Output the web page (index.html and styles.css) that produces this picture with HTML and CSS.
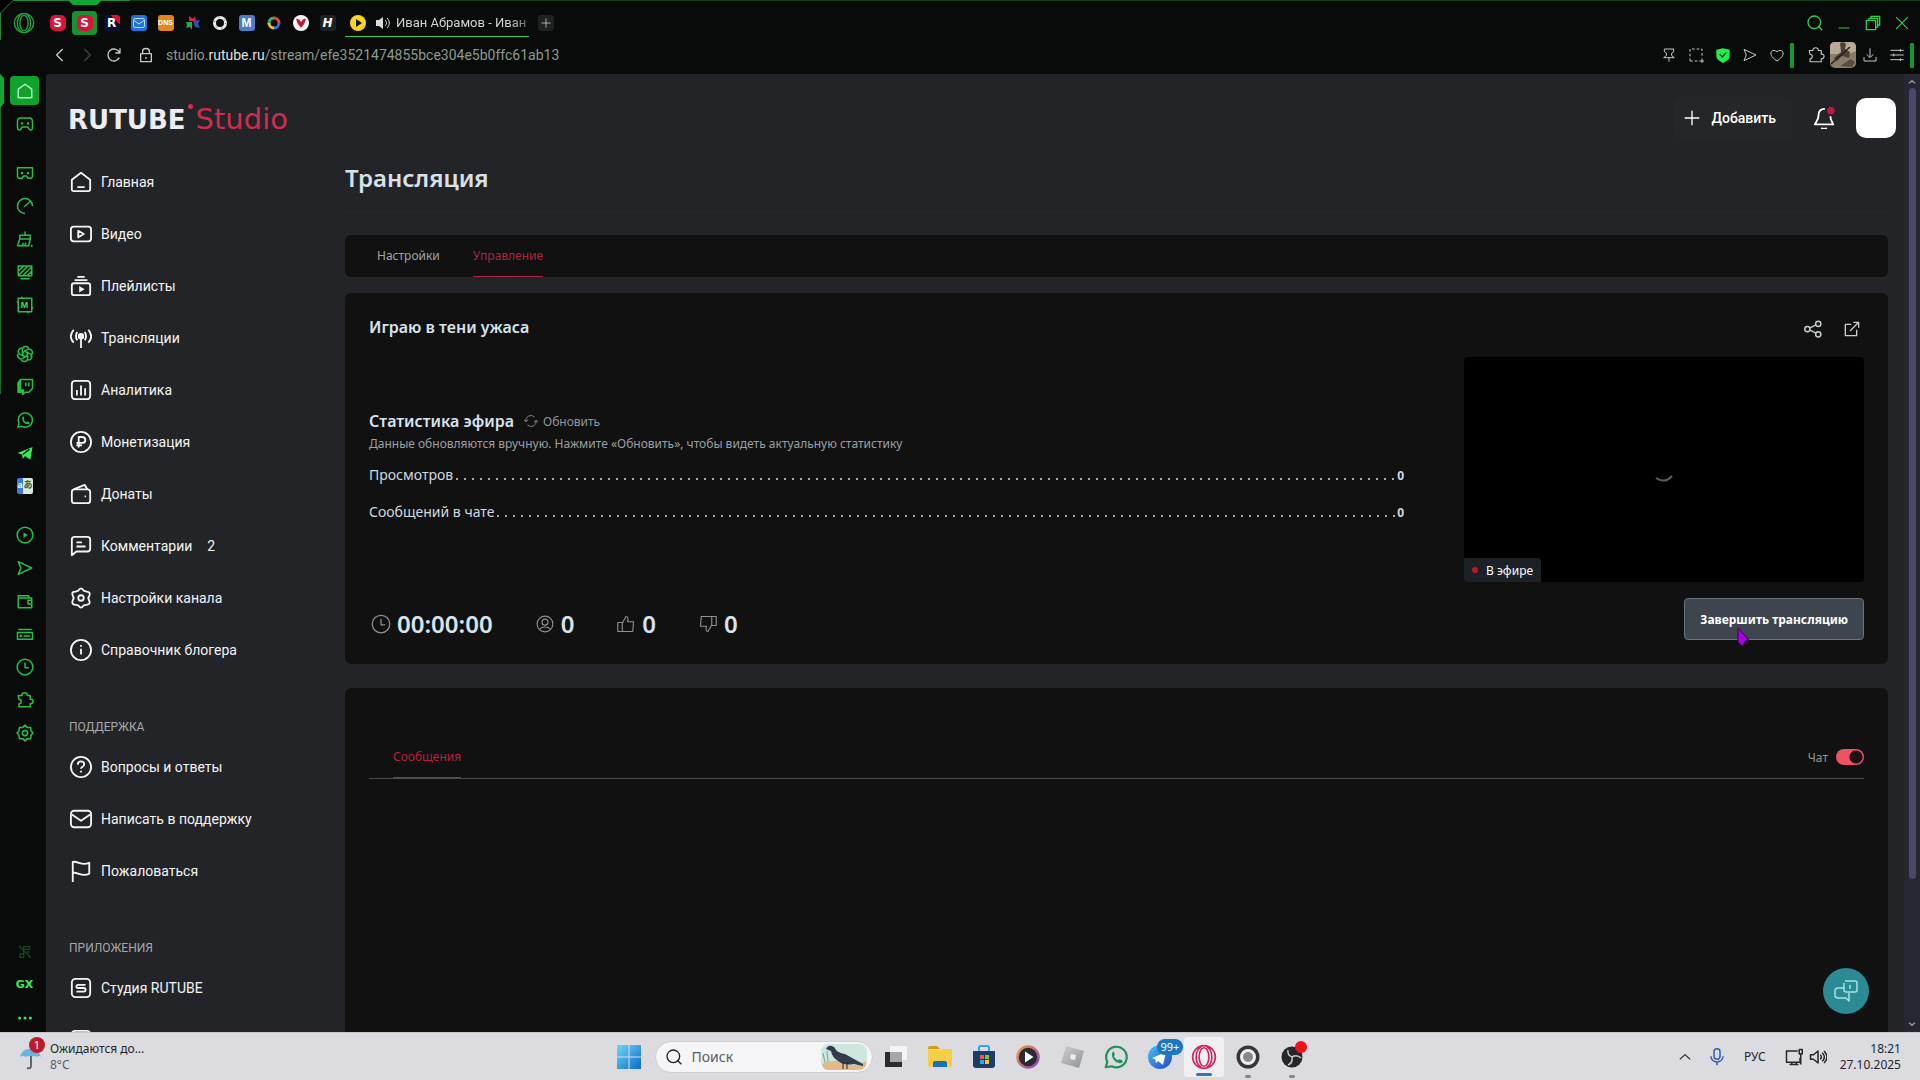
FILE: index.html
```html
<!DOCTYPE html>
<html lang="ru">
<head>
<meta charset="utf-8">
<title>RUTUBE Studio — Трансляция</title>
<link rel="stylesheet" href="styles.css">
</head>
<body>
<svg class="sprite" aria-hidden="true">
  <defs>
    <linearGradient id="win" x1="0" y1="0" x2="1" y2="1"><stop offset="0" stop-color="#6fd6f7"/><stop offset="1" stop-color="#0a6cc8"/></linearGradient>
    <linearGradient id="tg" x1="0" y1="0" x2="1" y2="1"><stop offset="0" stop-color="#4fc0f0"/><stop offset="1" stop-color="#1c46c8"/></linearGradient>
    <linearGradient id="media" x1="0" y1="0" x2="1" y2="1"><stop offset="0" stop-color="#f59a3c"/><stop offset="1" stop-color="#8a3fc0"/></linearGradient>
    <linearGradient id="silver" x1="0" y1="0" x2="1" y2="1"><stop offset="0" stop-color="#cdd0d2"/><stop offset="1" stop-color="#8e9294"/></linearGradient>
  </defs>
  <symbol id="opera" viewBox="0 0 24 24"><ellipse cx="12" cy="12" rx="10.500" ry="10.500"/><ellipse cx="12" cy="12" rx="4.500" ry="8.500"/><path d="M14 2c7 4 7 16 0 20M10 2c-7 4-7 16 0 20"/></symbol>
  <symbol id="home" viewBox="0 0 24 24"><path d="M3 9.500 12 3l9 6.500V21H3z"/></symbol>
  <symbol id="pad" viewBox="0 0 24 24"><path d="M6 4h12c3 0 4 2 4 5v8c0 4-4 4-5 1l-1-2H8l-1 2c-1 3-5 3-5-1V9c0-3 1-5 4-5z"/><path d="M6.500 11h3M14.500 11h3" stroke-width="3"/></symbol>
  <symbol id="vr" viewBox="0 0 24 24"><path d="M2 5h20v12l-2 2h-4l-2-3h-4l-2 3H4l-2-2z"/><path d="M6.500 12h3M14.500 12h3" stroke-width="3"/></symbol>
  <symbol id="gauge" viewBox="0 0 24 24"><path d="M12 22A10 10 0 1 1 22 12M11 13l9-8"/></symbol>
  <symbol id="broom" viewBox="0 0 24 24"><path d="M12 2v5M5 12V7h14v5zM5 12l-3 9h15l2-9M8 21l2-4M12 21l1-4"/><path d="M20 21h2" stroke-width="3"/></symbol>
  <symbol id="screen" viewBox="0 0 24 24"><path d="M3 4h18v13H3zM6 21h12M3 11l7-7M3 17 16 4M9 17 21 5M15 17l6-6"/></symbol>
  <symbol id="modbox" viewBox="0 0 24 24"><path d="M3 3h18v18H3zM8 1v2M16 21v2M1 8h2M21 16h2"/></symbol>
  <symbol id="gpt" viewBox="0 0 24 24"><path id="petal" d="M12 8.500 8.500 10.500v-5a4.500 4.500 0 0 1 8.500-1"/><use href="#petal" transform="rotate(60 12 12)"/><use href="#petal" transform="rotate(120 12 12)"/><use href="#petal" transform="rotate(180 12 12)"/><use href="#petal" transform="rotate(240 12 12)"/><use href="#petal" transform="rotate(300 12 12)"/></symbol>
  <symbol id="twitch" viewBox="0 0 24 24"><path d="M6 2h16v12l-5 5h-4l-4 3v-3H3V6z"/><path d="M13 6v5M17 6v5" stroke-width="2"/><path d="M3 7 6 3v13h4v3H3z" fill="currentColor"/></symbol>
  <symbol id="whats" viewBox="0 0 24 24"><path d="M2.500 21.500 4 16.500A9.500 9.500 0 1 1 8 20.500z"/><path d="M8 7l2 0 1 3-1 1c1 2 2 3 4 4l1-1 3 1v2c-5 3-12-4-9-10z" fill="currentColor" stroke="none"/></symbol>
  <symbol id="plane" viewBox="0 0 24 24"><path d="M2 12 22 4l-3 17-7-5-3 4-1-6z" fill="currentColor" stroke="none"/><path d="m9 14 9-7" stroke="#07150a"/></symbol>
  <symbol id="playc" viewBox="0 0 24 24"><circle cx="12" cy="12" r="10.500"/><path d="m10 8.500 6 3.500-6 3.500z" fill="currentColor" stroke="none"/></symbol>
  <symbol id="send" viewBox="0 0 24 24"><path d="M3 3.500 21 12 3 20.500 6.500 12z"/></symbol>
  <symbol id="wallet" viewBox="0 0 24 24"><path d="M3 8h18v13H3V5h14v3M21 11h-5v5h5"/></symbol>
  <symbol id="drive" viewBox="0 0 24 24"><path d="M3 6h18M2 10h20v9H2zM10 14.500h9"/><path d="M5 14.500h3" stroke-width="3"/></symbol>
  <symbol id="clock" viewBox="0 0 24 24"><circle cx="12" cy="12" r="10.500"/><path d="M12 6v7h5"/></symbol>
  <symbol id="puzzle" viewBox="0 0 24 24"><path d="M3 6h5c-1-5 8-5 7 0h4v5c5-1 5 6 0 6v4H4v-4c4 0 4-6 0-6z"/></symbol>
  <symbol id="gear" viewBox="0 0 24 24"><path d="M12 1.500l3 3 4.500 0 .5 4.500 2.500 3-2.500 3-.5 4.500-4.500 0-3 3-3-3-4.500 0L4 15l-2.500-3L4 9l.5-4.500 4.500 0z"/><circle cx="12" cy="12" r="3.500"/></symbol>
  <symbol id="mute" viewBox="0 0 24 24"><path d="M10 17V4h9v4h-9M5 15h5v5H4zM3 3l18 18M15 12h4"/></symbol>
  <symbol id="dots" viewBox="0 0 24 24"><g fill="currentColor" stroke="none"><circle cx="4" cy="12" r="2.300"/><circle cx="12" cy="12" r="2.300"/><circle cx="20" cy="12" r="2.300"/></g></symbol>
  <symbol id="search" viewBox="0 0 24 24"><circle cx="11" cy="11" r="9.500"/><path d="m17 17 6 6"/></symbol>
  <symbol id="plus" viewBox="0 0 24 24"><path d="M12 1v22M1 12h22"/></symbol>
  <symbol id="close" viewBox="0 0 24 24"><path d="m2 2 20 20M22 2 2 22"/></symbol>
  <symbol id="restore" viewBox="0 0 24 24"><path d="M2 8h14v14H2zM6 7V5h13v13h-2M9 4V2h13v13h-2"/></symbol>
  <symbol id="minus" viewBox="0 0 24 24"><path d="M1 22h22"/></symbol>
  <symbol id="back" viewBox="0 0 24 24"><path d="M16 3 7 12l9 9"/></symbol>
  <symbol id="fwd" viewBox="0 0 24 24"><path d="m8 3 9 9-9 9"/></symbol>
  <symbol id="reload" viewBox="0 0 24 24"><path d="M20 16a9 9 0 1 1 0-8M21 2v7h-7"/></symbol>
  <symbol id="lock" viewBox="0 0 24 24"><path d="M4 10h16v12H4zM7 10V6c0-5 10-5 10 0v4M12 15v3"/></symbol>
  <symbol id="pin" viewBox="0 0 24 24"><path d="M5 3h14v4l-3 2v4l4 3H4l4-3V9L5 7zM12 16v6"/></symbol>
  <symbol id="snap" viewBox="0 0 24 24"><path d="M3 21V3h18v12M3 21h12" stroke-dasharray="4 3"/><path d="M21 17v7M17 21h7"/></symbol>
  <symbol id="shield" viewBox="0 0 24 24"><path d="M2 4 12 2l10 2v10c0 5-6 8-10 10C8 22 2 19 2 14z" fill="#1ff04c" stroke="none"/><path d="m7 11 4 4 6-7" stroke="#0a3d16" stroke-width="2"/></symbol>
  <symbol id="heart" viewBox="0 0 24 24"><path d="M12 21C-4 11 4 1 12 7c8-6 16 4 0 14z"/></symbol>
  <symbol id="down" viewBox="0 0 24 24"><path d="M12 2v13M7 11l5 5 5-5M3 15v6h18v-6"/></symbol>
  <symbol id="sliders" viewBox="0 0 24 24"><path d="M2 5h20M2 12h20M2 19h20M17 3v4M7 10v4M17 17v4"/></symbol>
  <symbol id="sound" viewBox="0 0 24 24"><path d="M2 9v6h4l6 5V4L6 9zM15 9c2 2 2 4 0 6M17.500 6.500c4 3 4 8 0 11M20 4c5 5 5 11 0 16"/></symbol>
  <symbol id="n-home" viewBox="0 0 24 24"><path d="M2 9.500 12 2l10 7.500V20q0 2-2 2H4q-2 0-2-2zM8 17.500h8"/></symbol>
  <symbol id="n-video" viewBox="0 0 24 24"><rect x="1" y="4" width="22" height="16" rx="3"/><path d="m9 8.500 6 3.500-6 3.500z"/></symbol>
  <symbol id="n-list" viewBox="0 0 24 24"><rect x="2" y="9" width="20" height="13" rx="2.500"/><path d="M5 5.500h14M8 2h8"/><path d="m10 12 6 3.500-6 3.500z" fill="currentColor" stroke="none"/></symbol>
  <symbol id="n-live" viewBox="0 0 24 24"><circle cx="12" cy="10" r="2.500" fill="currentColor"/><path d="M12 10v13M8 5.500c-2 3-2 6 0 9M16 5.500c2 3 2 6 0 9M4 3c-4 5-4 10 0 14M20 3c4 5 4 10 0 14"/></symbol>
  <symbol id="n-stat" viewBox="0 0 24 24"><rect x="2" y="2" width="20" height="20" rx="3.500"/><path d="M7.500 12v6M12 7v11M16.500 10v8"/></symbol>
  <symbol id="n-rub" viewBox="0 0 24 24"><circle cx="12" cy="12" r="11"/><path d="M9.500 18V6.500H13c5 0 5 6.500 0 6.500H7M7 15.500h6"/></symbol>
  <symbol id="n-purse" viewBox="0 0 24 24"><rect x="2" y="7" width="20" height="15" rx="3"/><path d="m4 7 12-5 3 5M16 14.500h1.500"/></symbol>
  <symbol id="n-msg" viewBox="0 0 24 24"><path d="M2 22V5q0-3 3-3h14q3 0 3 3v10q0 3-3 3H7zM7 8h6M7 12.500h10"/></symbol>
  <symbol id="n-gear" viewBox="0 0 24 24"><path d="M9 4q3-5 6 0l3 1q5 0 3 5-2 2 0 5 2 4-3 4.500l-3 .5q-3 5-6 0l-3-.5Q1 19 3 14.500q2-2.500 0-5Q1 5 6 5z"/><circle cx="12" cy="12" r="3"/></symbol>
  <symbol id="n-info" viewBox="0 0 24 24"><circle cx="12" cy="12" r="11"/><path d="M12 10.500V17M12 6.500v2"/></symbol>
  <symbol id="n-help" viewBox="0 0 24 24"><circle cx="12" cy="12" r="11"/><path d="M8.500 9.500c0-5 7-4.500 7-.5 0 3-3.500 2.500-3.500 5M12 16v2"/></symbol>
  <symbol id="n-mail" viewBox="0 0 24 24"><rect x="1" y="3" width="22" height="18" rx="3.500"/><path d="m2 7 10 7 10-7"/></symbol>
  <symbol id="n-flag" viewBox="0 0 24 24"><path d="M3 24V2c6-1 10 5 18 1v12c-8 4-12-2-18-1"/></symbol>
  <symbol id="n-s" viewBox="0 0 24 24"><rect x="2" y="2" width="20" height="20" rx="4"/><path d="M17 8.500H9q-2 0-2 2t2 1.500h6q2 0 2 2t-2 2H7" stroke-width="2"/></symbol>
  <symbol id="bell" viewBox="0 0 24 24"><path d="M13 2C8 2 6 5 6 9c0 6-3 7-4 10h20c-1-3-3-4-3-9M9 23q3 2 6 0"/><circle cx="19.500" cy="4" r="4" fill="#c8173f" stroke="none"/></symbol>
  <symbol id="refresh" viewBox="0 0 24 24"><path d="M3 13a9 9 0 0 1 15-8M21 11a9 9 0 0 1-15 8M0 10l3 3 4-3M24 14l-3-3-4 3"/></symbol>
  <symbol id="user" viewBox="0 0 24 24"><circle cx="12" cy="12" r="10.500"/><circle cx="12" cy="9.500" r="4"/><path d="M5 19c3-4 11-4 14 0"/></symbol>
  <symbol id="like" viewBox="0 0 24 24"><path d="M1 10h6v12H1zM7 11l5-9c3 0 3 3 2 7h8l-1 13H7"/></symbol>
  <symbol id="share" viewBox="0 0 24 24"><circle cx="4.500" cy="12" r="3.500"/><circle cx="19" cy="5" r="3.500"/><circle cx="19" cy="19" r="3.500"/><path d="m8 10.500 8-4M8 13.500l8 4"/></symbol>
  <symbol id="open" viewBox="0 0 24 24"><path d="M11 5H2v17h17v-9M9 15 22 2M14 2h8v8"/></symbol>
  <symbol id="chats" viewBox="0 0 24 24"><path d="M11 2h10q2 0 2 2v7q0 2-2 2H12q-2 0-2-2V4M10 9H4q-3 0-3 3v4q0 3 3 3h8l3 3v-8M16 6v4"/></symbol>
  <symbol id="up" viewBox="0 0 24 24"><path d="m3 16 9-8 9 8"/></symbol>
  <symbol id="mic" viewBox="0 0 24 24"><rect x="8" y="1" width="8" height="14" rx="4"/><path d="M4 11c0 10 16 10 16 0M12 19v4"/></symbol>
  <symbol id="net" viewBox="0 0 24 24"><path d="M17 4H2v15h18v-6M6 22h12M9 19v3M15 19v3M19 2h4v6h-4zM21 8v14"/></symbol>
</svg>

<header class="browser">
  <svg class="frame-corner" width="130" height="40" viewBox="0 0 130 40" fill="none" aria-hidden="true"><path d="M0 0h14L0 14z" fill="#000"/><path d="M.5 40V13L13 .5h117" stroke="#1f8a38"/><path d="M68 0h34l-5 5H73z" fill="#10a832"/></svg>
  <div class="tabs">
    <button class="opera" aria-label="Меню"><svg class="ic i22"><use href="#opera"/></svg></button>
    <button class="tab"><i class="fav rt">S</i></button>
    <button class="tab on"><i class="fav rt">S</i></button>
    <button class="tab"><i class="fav rr">R</i></button>
    <button class="tab"><i class="fav mail"><svg class="ic i12"><use href="#n-mail"/></svg></i></button>
    <button class="tab"><i class="fav dns">DNS</i></button>
    <button class="tab"><svg class="i16" viewBox="0 0 16 16"><path d="M4 1l4 3 2-3 1 5H4z" fill="#e02040"/><path d="M1 7h6v8l-2-3-4 1 1-3z" fill="#27a84a"/><path d="M8 6l7-1-2 4 2 4-5-1z" fill="#2b50c0"/></svg></button>
    <button class="tab"><svg class="i16" viewBox="0 0 16 16"><circle cx="8" cy="8" r="5.500" fill="none" stroke="#eee" stroke-width="3"/><circle cx="8" cy="8" r="5.500" fill="none" stroke="#444" stroke-dasharray="1 5"/></svg></button>
    <button class="tab"><i class="fav mm">M</i></button>
    <button class="tab"><svg class="i16" viewBox="0 0 16 16" fill="none" stroke-width="3"><path d="M3 9a5 5 0 0 1 5-6" stroke="#3eb05c"/><path d="M8 3a5 5 0 0 1 5 5" stroke="#e24a3a"/><path d="M13 8a5 5 0 0 1-5 5" stroke="#3a6fe0"/><path d="M8 13a5 5 0 0 1-5-5" stroke="#e8c22c"/></svg></button>
    <button class="tab"><svg class="i16" viewBox="0 0 16 16"><circle cx="8" cy="8" r="8" fill="#fff"/><path d="M3 4q3-1 5 3 2-4 5-3-1 5-5 9-4-4-5-9z" fill="#c8172f"/></svg></button>
    <button class="tab"><i class="fav hh">H</i></button>
    <button class="tab wide"><svg class="i16" viewBox="0 0 16 16"><circle cx="8" cy="8" r="8" fill="#ffd518"/><path d="m6 4 6 4-6 4z" fill="#111"/></svg><svg class="i16" viewBox="0 0 16 16" fill="#ddd"><path d="M1 5h3l4-3v12l-4-3H1z"/><path d="M10 5c2 2 2 4 0 6M12 3c3 3 3 7 0 10" fill="none" stroke="#ddd"/></svg><span class="tab-text">Иван Абрамов - Иван</span></button>
    <button class="newtab" aria-label="Новая вкладка"><svg class="ic i10"><use href="#plus"/></svg></button>
    <div class="win">
      <button aria-label="Поиск"><svg class="ic i16"><use href="#search"/></svg></button>
      <button aria-label="Свернуть"><svg class="ic i12"><use href="#minus"/></svg></button>
      <button aria-label="Восстановить"><svg class="ic i16"><use href="#restore"/></svg></button>
      <button aria-label="Закрыть"><svg class="ic i14"><use href="#close"/></svg></button>
    </div>
  </div>
  <div class="address">
    <div class="nav-btns">
      <button aria-label="Назад"><svg class="ic i16"><use href="#back"/></svg></button>
      <button class="off" aria-label="Вперёд"><svg class="ic i16"><use href="#fwd"/></svg></button>
      <button aria-label="Обновить страницу"><svg class="ic i16"><use href="#reload"/></svg></button>
    </div>
    <svg class="ic i16 lock"><use href="#lock"/></svg>
    <span class="url">studio.<b>rutube.ru</b>/stream/efe3521474855bce304e5b0ffc61ab13</span>
    <div class="tools">
      <button aria-label="Закрепить"><svg class="ic i16"><use href="#pin"/></svg></button>
      <button aria-label="Снимок"><svg class="ic i16"><use href="#snap"/></svg></button>
      <button aria-label="Защита"><svg class="ic i16"><use href="#shield"/></svg></button>
      <button aria-label="Отправить"><svg class="ic i16"><use href="#send"/></svg></button>
      <button aria-label="Избранное"><svg class="ic i16"><use href="#heart"/></svg></button>
      <i class="bar"></i>
      <button class="ext" aria-label="Расширения"><svg class="ic i18"><use href="#puzzle"/></svg></button>
      <button aria-label="Профиль"><svg class="i26" viewBox="0 0 26 26"><rect width="26" height="26" rx="5" fill="#8b7c6c"/><path d="M0 5q0-5 5-5h16q5 0 5 5v4l-8 3H0z" fill="#b9aa98"/><path d="M10 1q4-2 6 1l-1 5 5 3-1 6-7-2-5 5-3-3 7-6z" fill="#4c4238"/><path d="M1 22 20 5" stroke="#26201b" stroke-width="1.500"/><path d="M10 24l11-7 4 3-3 5z" fill="#5a4c40"/></svg></button>
      <button aria-label="Загрузки"><svg class="ic i16"><use href="#down"/></svg></button>
      <button aria-label="Настройки"><svg class="ic i16"><use href="#sliders"/></svg></button>
      <i class="bar"></i>
    </div>
  </div>
</header>

<div class="workspace">
  <aside class="dock">
    <svg class="dock-edge" width="6" height="320" viewBox="0 0 6 320" fill="none" aria-hidden="true"><path d="M.5 0v320" stroke="#15702b"/><path d="M0 0l4 4v25l-4 5z" fill="#10a832"/></svg>
    <div class="dock-group">
      <button class="on" aria-label="Домой"><svg class="ic i18"><use href="#home"/></svg></button>
      <button aria-label="Игры"><svg class="ic i18"><use href="#pad"/></svg></button>
    </div>
    <div class="dock-group">
      <button aria-label="GX Corner"><svg class="ic i18"><use href="#vr"/></svg></button>
      <button aria-label="GX Control"><svg class="ic i18"><use href="#gauge"/></svg></button>
      <button aria-label="GX Cleaner"><svg class="ic i18"><use href="#broom"/></svg></button>
      <button aria-label="Обои"><svg class="ic i18"><use href="#screen"/></svg></button>
      <button class="mod" aria-label="Моды"><svg class="ic i18"><use href="#modbox"/></svg><b>M</b></button>
    </div>
    <div class="dock-group">
      <button aria-label="ChatGPT"><svg class="ic i18"><use href="#gpt"/></svg></button>
      <button aria-label="Twitch"><svg class="ic i18"><use href="#twitch"/></svg></button>
      <button aria-label="WhatsApp"><svg class="ic i18"><use href="#whats"/></svg></button>
      <button aria-label="Telegram" class="lit"><svg class="ic i18"><use href="#plane"/></svg></button>
      <button aria-label="Переводчик"><span class="tr"><b>a</b><b>あ</b></span></button>
    </div>
    <div class="dock-group">
      <button aria-label="Плеер"><svg class="ic i18"><use href="#playc"/></svg></button>
      <button aria-label="My Flow"><svg class="ic i18"><use href="#send"/></svg></button>
      <button aria-label="Кошелёк"><svg class="ic i18"><use href="#wallet"/></svg></button>
      <button aria-label="Диск"><svg class="ic i18"><use href="#drive"/></svg></button>
      <button aria-label="История"><svg class="ic i18"><use href="#clock"/></svg></button>
      <button aria-label="Расширения"><svg class="ic i18"><use href="#puzzle"/></svg></button>
      <button aria-label="Параметры"><svg class="ic i18"><use href="#gear"/></svg></button>
    </div>
    <div class="dock-group end">
      <button class="dim" aria-label="Без звука"><svg class="ic i16"><use href="#mute"/></svg></button>
      <button class="gx lit">GX</button>
      <button class="lit" aria-label="Ещё"><svg class="ic i16"><use href="#dots"/></svg></button>
    </div>
  </aside>

  <div class="page">
    <header class="top">
      <a class="logo" href="#"><b>RUTUBE</b><i></i><span>Studio</span></a>
      <button class="add"><svg class="ic i16"><use href="#plus"/></svg>Добавить</button>
      <button class="bell" aria-label="Уведомления"><svg class="ic i22"><use href="#bell"/></svg></button>
      <button class="ava" aria-label="Профиль"></button>
    </header>
    <div class="columns">
      <nav class="menu">
        <a href="#"><svg class="ic i22"><use href="#n-home"/></svg>Главная</a>
        <a href="#"><svg class="ic i22"><use href="#n-video"/></svg>Видео</a>
        <a href="#"><svg class="ic i22"><use href="#n-list"/></svg>Плейлисты</a>
        <a href="#"><svg class="ic i22"><use href="#n-live"/></svg>Трансляции</a>
        <a href="#"><svg class="ic i22"><use href="#n-stat"/></svg>Аналитика</a>
        <a href="#"><svg class="ic i22"><use href="#n-rub"/></svg>Монетизация</a>
        <a href="#"><svg class="ic i22"><use href="#n-purse"/></svg>Донаты</a>
        <a href="#"><svg class="ic i22"><use href="#n-msg"/></svg>Комментарии<span class="count">2</span></a>
        <a href="#"><svg class="ic i22"><use href="#n-gear"/></svg>Настройки канала</a>
        <a href="#"><svg class="ic i22"><use href="#n-info"/></svg>Справочник блогера</a>
        <h2>ПОДДЕРЖКА</h2>
        <a href="#"><svg class="ic i22"><use href="#n-help"/></svg>Вопросы и ответы</a>
        <a href="#"><svg class="ic i22"><use href="#n-mail"/></svg>Написать в поддержку</a>
        <a href="#"><svg class="ic i22"><use href="#n-flag"/></svg>Пожаловаться</a>
        <h2>ПРИЛОЖЕНИЯ</h2>
        <a href="#"><svg class="ic i22"><use href="#n-s"/></svg>Студия RUTUBE</a>
        <a href="#" aria-label="Приложение"><svg class="ic i22"><use href="#n-stat"/></svg></a>
      </nav>
      <main class="main">
        <h1>Трансляция</h1>
        <div class="card switch">
          <button>Настройки</button>
          <button class="on">Управление</button>
        </div>
        <section class="card stream">
          <div class="info">
            <h3>Играю в тени ужаса</h3>
            <div class="stat-head"><h3>Статистика эфира</h3><button><svg class="ic i14"><use href="#refresh"/></svg>Обновить</button></div>
            <p class="note">Данные обновляются вручную. Нажмите «Обновить», чтобы видеть актуальную статистику</p>
            <dl>
              <div><dt>Просмотров</dt><i class="leader"></i><dd>0</dd></div>
              <div><dt>Сообщений в чате</dt><i class="leader"></i><dd>0</dd></div>
            </dl>
            <div class="totals">
              <span class="time"><svg class="ic i20"><use href="#clock"/></svg>00:00:00</span>
              <span><svg class="ic i18"><use href="#user"/></svg>0</span>
              <span><svg class="ic i18"><use href="#like"/></svg>0</span>
              <span><svg class="ic i18 flip"><use href="#like"/></svg>0</span>
            </div>
          </div>
          <div class="side">
            <div class="links">
              <button aria-label="Поделиться"><svg class="ic i18"><use href="#share"/></svg></button>
              <button aria-label="Открыть"><svg class="ic i16"><use href="#open"/></svg></button>
            </div>
            <div class="video">
              <svg width="18" height="8" viewBox="0 0 18 8" fill="none" aria-hidden="true"><path d="M1 4q9 6 16-2" stroke="#5c5c5c" stroke-width="2"/></svg>
              <span class="live"><i></i>В эфире</span>
            </div>
            <button class="finish">Завершить трансляцию<svg class="cursor" width="14" height="20" viewBox="0 0 14 20" aria-hidden="true"><path d="M1 1l11 12-4 1-2 5-2-1-3-3z" fill="#a800e0" stroke="#320048"/></svg></button>
          </div>
        </section>
        <section class="card chat">
          <div class="chat-bar">
            <button class="on">Сообщения</button>
            <label>Чат<input type="checkbox" checked></label>
          </div>
        </section>
      </main>
    </div>
    <button class="fab" aria-label="Чат с поддержкой"><svg class="ic i24"><use href="#chats"/></svg></button>
  </div>
  <div class="scroll" aria-hidden="true">
    <svg class="ic i8"><use href="#up"/></svg>
    <div class="track"><i></i></div>
    <svg class="ic i8 flip"><use href="#up"/></svg>
  </div>
</div>

<footer class="taskbar">
  <button class="weather">
    <span class="umb"><svg width="24" height="28" viewBox="0 0 24 28"><path d="M1 14C3 3 19 3 22 14q-2-2-4 0-3-2-6 0-3-2-5 0-3-2-6 0z" fill="#6cb2e4"/><path d="M12 13v10q0 3-4 2" fill="none" stroke="#666" stroke-width="2"/></svg><b>1</b></span>
    <span class="lines"><span>Ожидаются до...</span><small>8°C</small></span>
  </button>
  <div class="apps">
    <button aria-label="Пуск"><svg class="i24" viewBox="0 0 24 24" fill="url(#win)"><path d="M0 0h11.500v11.500H0zM12.500 0H24v11.500H12.500zM0 12.500h11.500V24H0zM12.500 12.500H24V24H12.500z"/></svg></button>
    <label class="find"><svg class="ic i16"><use href="#search"/></svg><input type="text" placeholder="Поиск" aria-label="Поиск"><svg width="46" height="26" viewBox="0 0 46 26"><rect width="46" height="26" rx="8" fill="#cfe6df"/><path d="M1 20q12-6 22-1t22-2v4q-2 5-8 5H8q-6 0-7-6z" fill="#e3b88a"/><path d="M4 19 2 9M7 18 6 7" stroke="#7aa884"/><path d="M5 5q2-4 6-3 3 1 4 4 3 3 9 4l18 10 0 2-9-2q-10 2-16-3Q11 13 10 7z" fill="#333b4e"/><path d="M22 18v7M26 18v7" stroke="#222"/></svg></label>
    <button aria-label="Представление задач"><svg class="i24" viewBox="0 0 24 24"><path d="M6 1h17v14H6z" fill="#f4f4f4"/><path d="M1 7h17v15H1z" fill="#2c2c2e"/><path d="M6 7h12v10H6z" fill="#a6a6a8"/></svg></button>
    <button aria-label="Проводник"><svg class="i24" viewBox="0 0 24 24"><path d="M0 3q0-2 2-2h7l3 3H0z" fill="#d89a12"/><path d="M0 5h12l1-1h9q2 0 2 2v14q0 2-2 2H2q-2 0-2-2z" fill="#f8cd48"/><path d="M5 22v-4q0-2 2-2h10q2 0 2 2v4z" fill="#1472b8"/></svg></button>
    <button aria-label="Магазин"><svg class="i24" viewBox="0 0 24 24"><path d="M7 6V3q0-2 2-2h6q2 0 2 2v3" fill="none" stroke="#38a6dc" stroke-width="2"/><path d="M1 6h22v14q0 3-3 3H4q-3 0-3-3z" fill="#1c3c66"/><path d="M8 10h4v4H8z" fill="#f05a3c"/><path d="M13 10h4v4h-4z" fill="#82c040"/><path d="M8 15h4v4H8z" fill="#30a8e8"/><path d="M13 15h4v4h-4z" fill="#fac02c"/></svg></button>
    <button aria-label="Медиаплеер"><svg class="i24" viewBox="0 0 24 24"><circle cx="12" cy="12" r="10.500" fill="#2b2a33" stroke="url(#media)" stroke-width="2.500"/><path d="m9 6.500 8.500 5.500L9 17.500z" fill="#fff"/></svg></button>
    <button aria-label="Roblox Studio"><svg class="i24" viewBox="0 0 24 24"><path d="m6 1 18 5-5 17-18-5z" fill="url(#silver)"/><path d="m11 9 5 1-1 5-5-1z" fill="#eceeee"/></svg></button>
    <button aria-label="WhatsApp" class="wa"><svg class="ic i26"><use href="#whats"/></svg></button>
    <button aria-label="Telegram" class="tele"><svg class="i24" viewBox="0 0 24 24"><circle cx="12" cy="12" r="12" fill="url(#tg)"/><path d="m4 13 14-6-3 13-5-4-2 2-1-4z" fill="#fff"/></svg><b>99+</b></button>
    <button aria-label="Opera GX" class="op"><svg class="ic i26"><use href="#opera"/></svg></button>
    <button aria-label="Запись" class="run"><svg class="i24" viewBox="0 0 24 24"><circle cx="12" cy="12" r="11.500" fill="#34373a"/><circle cx="12" cy="12" r="6.500" fill="#888" stroke="#eee" stroke-width="3"/></svg></button>
    <button aria-label="OBS" class="run rec"><svg class="i24" viewBox="0 0 24 24"><circle cx="12" cy="12" r="10.500" fill="#26262a"/><path d="M12 12q-5-2-4-7M12 12q5-3 9 1M12 12q1 6-4 8" fill="none" stroke="#c8c8cc" stroke-width="1.500"/></svg><b></b></button>
  </div>
  <div class="tray">
    <button aria-label="Скрытые значки"><svg class="ic i14"><use href="#up"/></svg></button>
    <button aria-label="Микрофон" class="micb"><svg class="ic i18"><use href="#mic"/></svg></button>
    <button class="lang">РУС</button>
    <button aria-label="Сеть и звук" class="pair"><svg class="ic i18"><use href="#net"/></svg><svg class="ic i18"><use href="#sound"/></svg></button>
    <button class="when"><span>18:21</span><span>27.10.2025</span></button>
  </div>
</footer>
</body>
</html>
```
FILE: styles.css
```css
* { box-sizing: border-box; }
html, body { height: 100%; }
body { margin: 0; display: flex; flex-direction: column; overflow: hidden; background: #080b09; color: #e6e8ea; font-family: "Noto Sans", "Open Sans", sans-serif; font-size: 14px; }
button { font: inherit; color: inherit; background: none; border: 0; padding: 0; display: flex; align-items: center; justify-content: center; cursor: pointer; }
a { color: inherit; text-decoration: none; }
h1, h2, h3, p, dl, dd { margin: 0; }
svg { display: block; flex: none; }
.sprite { position: absolute; width: 0; height: 0; }
.ic { fill: none; stroke: currentColor; stroke-width: 1.5; stroke-linejoin: round; }
.i8 { width: 8px; height: 8px; }
.i10 { width: 10px; height: 10px; }
.i12 { width: 12px; height: 12px; }
.i14 { width: 14px; height: 14px; }
.i16 { width: 16px; height: 16px; }
.i18 { width: 18px; height: 18px; }
.i20 { width: 20px; height: 20px; }
.i22 { width: 22px; height: 22px; }
.i24 { width: 24px; height: 24px; }
.i26 { width: 26px; height: 26px; }
.flip { transform: rotate(180deg); }

/* browser chrome */
.browser { position: relative; flex: none; height: 74px; border-top: 1px solid #14391d; font-family: Roboto, sans-serif; color: #c3c9c5; }
.frame-corner { position: absolute; left: 0; top: -1px; }
.tabs { position: relative; display: flex; align-items: center; height: 36px; padding: 8px 4px 0 8px; }
.opera { width: 32px; margin-right: 4px; color: #1fa03c; }
.tab { width: 27px; height: 28px; }
.tab.on { background: #17922f; border-radius: 4px; width: 25px; height: 24px; margin: 0 1px; }
.fav { width: 16px; height: 16px; display: flex; align-items: center; justify-content: center; border-radius: 3px; font: 700 12px/16px "DejaVu Sans", sans-serif; color: #fff; }
.fav.rt { background: #d8143e; border-radius: 5px; }
.fav.rr { background: linear-gradient(45deg, #0d1030 70%, #d8143e 70%); }
.fav.mail { background: #1d74e0; }
.fav.dns { background: #e2851c; font: 700 7px/16px "Liberation Sans", sans-serif; }
.fav.mm { background: #4a7dc8; font-family: "Liberation Sans", sans-serif; }
.fav.hh { background: #1d2229; font-style: italic; }
.tab.wide { width: 184px; justify-content: flex-start; gap: 9px; padding-left: 5px; margin-left: 4px; border-bottom: 1px solid #35c653; font-size: 13px; }
.tab-text { flex: 1; margin-left: -4px; text-align: left; white-space: nowrap; color: #d0d4d1; -webkit-mask-image: linear-gradient(90deg, #000 85%, #0006); mask-image: linear-gradient(90deg, #000 85%, #0006); }
.newtab { width: 16px; height: 16px; margin-left: 9px; background: #1d211f; border-radius: 3px; }
.newtab .ic { stroke-width: 2; }
.win { margin-left: auto; display: flex; color: #2cd050; }
.win .ic { stroke-width: 2; }
.win button { width: 29px; height: 24px; }
.address { display: flex; align-items: center; height: 36px; padding: 0 6px 0 46px; }
.nav-btns { display: flex; }
.nav-btns button { width: 27px; height: 28px; }
.nav-btns .ic, .address > .lock { stroke-width: 2; }
.off { opacity: .3; }
.lock { margin: 0 12px 0 11px; }
.url { flex: 1; font-size: 14px; color: #8d9a92; }
.url b { font-weight: 400; color: #dde2df; }
.tools { display: flex; align-items: center; }
.tools button { width: 27px; height: 26px; }
.tools .ext { margin-left: 8px; }
.bar { width: 4px; height: 25px; background: #159632; border-radius: 1px; }

/* left dock */
.workspace { flex: 1; min-height: 0; display: flex; }
.dock { position: relative; flex: none; width: 46px; display: flex; flex-direction: column; gap: 16px; color: #25c04a; padding-right: 7px; }
.dock .ic { stroke-width: 2; }
.dock-edge { position: absolute; left: 0; top: 0; }
.dock-group { display: flex; flex-direction: column; align-items: flex-end; }
.dock-group button { width: 29px; height: 33px; }
.dock-group .on { height: 29px; margin: 2px 0; background: #0fa32c; border-radius: 4px; color: #b9f2c4; }
.dock-group.end { margin-top: auto; margin-bottom: -2px; }
.dock .lit { color: #2ff05a; }
.mod { position: relative; }
.mod b { position: absolute; font: 700 9px/12px "Liberation Sans", sans-serif; color: #2fe056; }
.tr { display: flex; width: 16px; height: 16px; border-radius: 2px; overflow: hidden; font: 700 9px/14px "Liberation Sans", "Noto Sans CJK JP", sans-serif; }
.tr b { flex: 1; background: #3c7be0; color: #fff; }
.tr b + b { background: #dfe8e0; color: #35793f; }
.dim { opacity: .35; }
.gx { font: 700 11px/14px "DejaVu Sans", sans-serif; }

/* studio page */
.page { position: relative; flex: 1; min-width: 0; overflow: hidden; background: #232427; border-radius: 4px 0 0 0; }
.top { display: flex; align-items: center; height: 40px; margin: 24px 8px 18px 22px; font-family: Roboto, sans-serif; }
.logo { display: flex; align-items: baseline; margin-right: auto; padding-top: 3px; font: 26px/32px "DejaVu Sans", sans-serif; color: #ececf2; }
.logo i { width: 5px; height: 5px; border-radius: 50%; background: #d52b50; align-self: flex-start; margin: 1px 3px 0 2px; }
.logo span { font-size: 29px; color: #cf2c52; }
.add { height: 42px; padding: 0 16px 0 10px; gap: 12px; font-size: 14px; font-weight: 500; color: #fff; background: #25262a; border-radius: 6px; }
.add .ic, .bell .ic, .menu .ic { stroke-width: 2; }
.bell { width: 40px; height: 40px; margin: 0 12px; color: #fff; }
.ava { width: 40px; height: 40px; background: #fff; border-radius: 10px; }
.columns { display: flex; }
.menu { flex: none; width: 299px; padding-left: 24px; font: 14px/20px Roboto, sans-serif; color: #f4f5f6; }
.menu a { display: flex; align-items: center; gap: 9px; height: 52px; }
.menu h2 { margin: 41px 0 4px -1px; font: 12px/20px Roboto, sans-serif; color: #a6a8ab; }
.count { margin-left: 6px; }
.main { flex: 1; min-width: 0; padding-right: 16px; }
h1 { font-size: 24px; line-height: 34px; font-weight: 600; color: #d9e0e8; padding: 5px 0 16px; border-bottom: 1px solid #28292d; }
.card { background: #111; border-radius: 6px; }
.switch { display: flex; gap: 33px; margin-top: 23px; height: 42px; padding: 0 32px; font-size: 12px; color: #a2a5a8; }
.switch button, .chat-bar button { border-bottom: 1px solid transparent; }
.switch .on, .chat-bar .on { color: #b3213f; border-color: #b3213f; }
.stream { display: flex; justify-content: space-between; margin-top: 16px; height: 371px; padding: 22px 24px 24px; }
.info { flex: 1; max-width: 1036px; display: flex; flex-direction: column; }
h3 { font-size: 16px; line-height: 24px; font-weight: 600; color: #d7e4ec; }
.stat-head { display: flex; align-items: center; gap: 10px; margin-top: 70px; }
.stat-head button { gap: 5px; font-size: 12px; color: #8f979e; }
.note { font-size: 12px; line-height: 22px; color: #99a0a6; }
dl { margin-top: 1px; }
dl > div { display: flex; align-items: baseline; height: 37px; line-height: 37px; }
dt { color: #d0dae0; }
dd { font-size: 12px; font-weight: 700; color: #d0dae0; margin: 0 1px 0 2px; }
.leader { flex: 1; align-self: center; height: 2px; margin: 9px 0 0 3px; background: repeating-linear-gradient(90deg, #a4a9ac 0 2px, transparent 2px 8px); }
.totals { display: flex; gap: 43px; margin-top: auto; margin-bottom: -1px; font-size: 24px; line-height: 34px; font-weight: 600; color: #d7e4ec; }
.totals span { display: flex; align-items: center; gap: 7px; }
.totals svg { color: #8d9195; }
.totals .time { padding-left: 2px; gap: 6px; }
.side { flex: none; width: 400px; display: flex; flex-direction: column; }
.links { display: flex; justify-content: flex-end; gap: 22px; height: 42px; padding: 0 4px 14px 0; color: #c8cdd0; }
.links .ic { stroke-width: 2; }
.video { position: relative; height: 225px; background: #000; border-radius: 4px; display: grid; place-items: center; padding-top: 17px; }
.live { position: absolute; left: 0; bottom: 0; display: flex; align-items: center; gap: 8px; height: 24px; padding: 0 8px; background: #1e2028; border-radius: 0 4px 0 4px; font-size: 12px; color: #fff; }
.live i { width: 6px; height: 6px; border-radius: 50%; background: #c81428; }
.finish { position: relative; align-self: flex-end; margin-top: 16px; height: 42px; padding: 0 15px; border: 1px solid #6c737b; border-radius: 4px; background: #3d454f; color: #fff; font-size: 12px; font-weight: 700; }
.cursor { position: absolute; left: 52px; top: 28px; }
.chat { margin-top: 24px; height: 600px; padding: 48px 24px 0; font-size: 12px; }
.chat-bar { display: flex; justify-content: space-between; height: 43px; padding-left: 24px; border-bottom: 1px solid #4b4b4d; }
.chat-bar label { display: flex; align-items: center; gap: 8px; color: #8f979b; }
.chat-bar input { appearance: none; margin: 0; width: 28px; height: 16px; border-radius: 8px; background: radial-gradient(circle at 20px 8px, #1c1214 6px, transparent 7px) #ee5265; }
.fab { position: absolute; right: 35px; bottom: 18px; width: 46px; height: 46px; border-radius: 50%; background: #2b8b94; color: #a8e2e8; }
.scroll { flex: none; width: 16px; display: flex; flex-direction: column; align-items: center; justify-content: space-between; padding: 4px 0; background: #262733; color: #9a9ab0; }
.scroll .ic { stroke-width: 4; }
.track { flex: 1; width: 7px; margin: 2px 0; }
.track i { display: block; height: 85%; background: #4b4965; border-radius: 4px; }

/* taskbar */
.taskbar { flex: none; height: 48px; display: grid; grid-template-columns: 1fr auto 1fr; align-items: center; background: #dcdce0; border-top: 1px solid #c4c4c8; color: #26262a; }
.weather { justify-self: start; gap: 7px; padding-left: 19px; font-size: 12px; }
.umb { position: relative; }
.umb b { position: absolute; left: 10px; top: -6px; width: 16px; height: 16px; border-radius: 50%; background: #b91d28; color: #fff; font: 11px/16px "Noto Sans", sans-serif; }
.lines { display: flex; flex-direction: column; align-items: flex-start; line-height: 16px; }
.lines small { font-size: 12px; color: #5e5e64; }
.apps { display: flex; align-items: center; }
.apps button { position: relative; flex: none; width: 44px; height: 44px; }
.find { flex: none; display: flex; align-items: center; width: 218px; height: 32px; margin: 0 1px 0 4px; padding: 0 5px 0 10px; background: #f5f5f7; border: 1px solid #cfcfd4; border-radius: 16px; color: #222; }
.find .ic { stroke-width: 2; }
.find input { flex: 1; min-width: 0; border: 0; padding: 0 10px; background: none; font: 14px "Noto Sans", sans-serif; outline: 0; }
.find input::placeholder { color: #5c5c62; opacity: 1; }
.wa { color: #23905a; }
.wa .ic { stroke-width: 2; }
.tele b { position: absolute; left: 19px; top: 4px; height: 16px; padding: 0 4px; border-radius: 8px; background: #1976c0; color: #fff; font: 11px/16px "Noto Sans", sans-serif; }
.apps .op { width: 40px; height: 40px; margin: 0 2px; background: #f0f0f3; border-radius: 4px; color: #d6225c; }
.op::after, .run::after { content: ""; position: absolute; bottom: 1px; width: 16px; height: 3px; border-radius: 2px; background: #2a78bd; }
.run::after { width: 6px; background: #85858a; }
.rec b { position: absolute; right: 7px; top: 6px; width: 12px; height: 12px; border-radius: 50%; background: #f0101a; }
.tray { justify-self: end; display: flex; align-items: center; padding-right: 19px; font-size: 12px; }
.tray button { height: 44px; padding: 0 8px; }
.tray .ic { stroke-width: 2; }
.tray .micb { color: #2a62ac; }
.tray .lang { padding: 0 11px 0 10px; }
.tray .pair { gap: 6px; }
.tray .when { flex-direction: column; align-items: flex-end; line-height: 16px; padding: 0 0 0 5px; }
```
